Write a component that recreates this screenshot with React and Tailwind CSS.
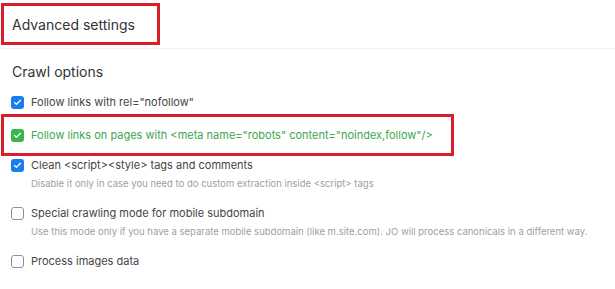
import { Check } from 'lucide-react'

const font = { fontFamily: 'Inter, "Noto Sans", sans-serif' }

function Box({ checked, color }) {
  if (!checked) {
    return <span className="w-[13px] h-[13px] shrink-0 rounded-[3px] border border-[#8f8f8f] bg-white" />
  }
  return (
    <span className={`w-[13px] h-[13px] shrink-0 rounded-[3px] flex items-center justify-center ${color}`}>
      <Check size={9} strokeWidth={3.5} className="text-white" />
    </span>
  )
}

function Option({ checked, color = 'bg-[#1a7cf0]', label, hint, green }) {
  return (
    <div>
      <div className="flex items-center gap-[7px]">
        <Box checked={checked} color={color} />
        <span className={`whitespace-nowrap text-[11px] leading-[16px] ${green ? 'text-[#3ea64c]' : 'text-[#454545]'}`}>{label}</span>
      </div>
      {hint && <p className="whitespace-nowrap pl-[20px] mt-[4px] text-[9.5px] leading-[14px] text-[#a0a0a0]">{hint}</p>}
    </div>
  )
}

export default function App() {
  return (
    <div className="w-[615px] h-[289px] bg-white overflow-hidden" style={font}>
      {/* header */}
      <div className="h-[49px] border-b border-[#f0f0f0] pt-[3px] pl-[1px]">
        <div className="w-[159px] h-[42px] border-[3px] border-[#d7202c] flex items-center pl-[8px]">
          <span className="text-[14px] text-[#333]">Advanced settings</span>
        </div>
      </div>

      <h2 className="pl-[12px] mt-[14px] text-[14px] leading-[18px] text-[#333]">Crawl options</h2>

      <div className="pl-[11px] mt-[13px]">
        <Option checked label={'Follow links with rel="nofollow"'} />
      </div>

      <div className="ml-[1px] mt-[4px] w-[453px] h-[42px] border-[3px] border-[#d7202c] flex items-center pl-[7px]">
        <Option checked color="bg-[#3cb64b]" green label={'Follow links on pages with <meta name="robots" content="noindex,follow"/>'} />
      </div>

      <div className="pl-[11px] mt-[1px] flex flex-col gap-[14px]">
        <Option checked label="Clean <script><style> tags and comments"
          hint="Disable it only in case you need to do custom extraction inside <script> tags" />
        <Option label="Special crawling mode for mobile subdomain"
          hint="Use this mode only if you have a separate mobile subdomain (like m.site.com). JO will process canonicals in a different way." />
        <Option label="Process images data" />
      </div>
    </div>
  )
}
